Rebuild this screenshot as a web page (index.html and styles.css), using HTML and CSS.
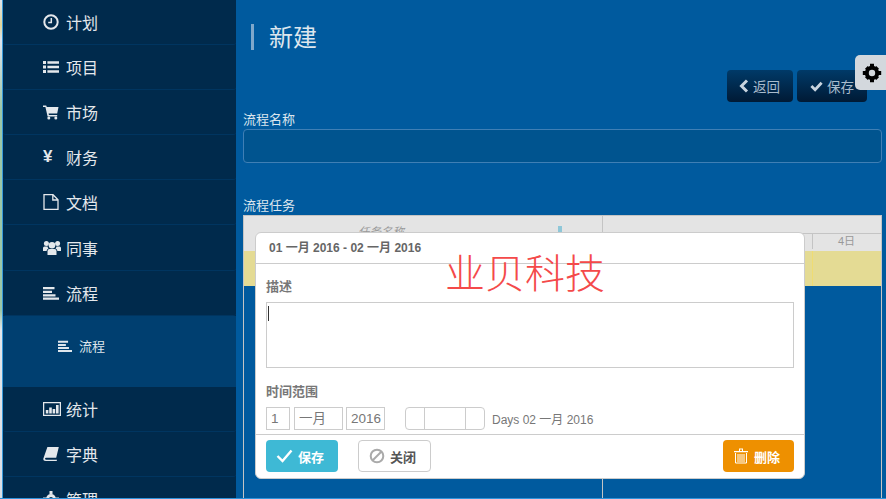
FILE: index.html
```html
<!DOCTYPE html>
<html lang="zh-CN">
<head>
    <meta charset="UTF-8">
    <title>新建流程</title>
    <link rel="stylesheet" href="styles.css">
</head>
<body>
    <div class="page">
        <div class="edge"></div>
        <nav class="sidebar">
            <a class="nav-item">
                <svg class="nav-icon" viewBox="0 0 16 16"><circle cx="8" cy="8" r="6.700" fill="none" stroke="currentColor" stroke-width="2"/><path d="M8.300 4v4.600H5.200" fill="none" stroke="currentColor" stroke-width="1.500"/></svg>
                <span>计划</span>
            </a>
            <a class="nav-item">
                <svg class="nav-icon" viewBox="0 0 16 16"><path d="M0 2h3v3H0zM0 6.500h3v3H0zM0 11h3v3H0zM4.400 2.300H16v2.400H4.400zM4.400 6.800H16v2.400H4.400zM4.400 11.300H16v2.400H4.400z" fill="currentColor"/></svg>
                <span>项目</span>
            </a>
            <a class="nav-item">
                <svg class="nav-icon" viewBox="0 0 16 16"><path d="M0 1.500h3.200l.6 1.600H15.500l-1.300 6.400H5.600l.3 1.400h8.300v1.500H4.600L2.400 3H0z" fill="currentColor"/><circle cx="5.800" cy="14" r="1.500" fill="currentColor"/><circle cx="12.800" cy="14" r="1.500" fill="currentColor"/></svg>
                <span>市场</span>
            </a>
            <a class="nav-item">
                <span class="nav-yen">¥</span>
                <span>财务</span>
            </a>
            <a class="nav-item">
                <svg class="nav-icon" viewBox="0 0 16 16"><path d="M1 .7h9L15 5.700v9.700H1zM9.800 1v5H15" fill="none" stroke="currentColor" stroke-width="1.300"/></svg>
                <span>文档</span>
            </a>
            <a class="nav-item">
                <svg class="nav-icon nav-icon-wide" viewBox="0 0 18 16"><circle cx="9" cy="5.300" r="3.300" fill="currentColor"/><circle cx="3.400" cy="3.600" r="2.500" fill="currentColor"/><circle cx="14.600" cy="3.600" r="2.500" fill="currentColor"/><path d="M4.500 15V11Q4.500 9 6.500 9h5q2 0 2 2V15zM0 11V8Q0 6.400 1.600 6.400H4.500Q4.800 7.800 5.500 8.400 3.600 9 3.600 11zM18 11V8Q18 6.400 16.400 6.400H13.500Q13.200 7.800 12.500 8.400 14.400 9 14.400 11z" fill="currentColor"/></svg>
                <span>同事</span>
            </a>
            <a class="nav-item">
                <svg class="nav-icon" viewBox="0 0 16 16"><path d="M0 2h11.500v2.200H0zM0 5.800h9v2.200H0zM0 9.200h12.500v2.200H0zM0 12.600h16v2.200H0z" fill="currentColor"/></svg>
                <span>流程</span>
            </a>
            <div class="nav-sub">
                <svg class="nav-icon sub-icon" viewBox="0 0 16 16"><path d="M0 2h11.500v2.200H0zM0 5.800h9v2.200H0zM0 9.200h12.500v2.200H0zM0 12.600h16v2.200H0z" fill="currentColor"/></svg>
                <span>流程</span>
            </div>
            <a class="nav-item">
                <svg class="nav-icon nav-icon-wide" viewBox="0 0 18 16"><path d="M.6 1.600h16.800v12.800H.6z" fill="none" stroke="currentColor" stroke-width="1.300"/><path d="M2.800 9h2.600v3.600H2.800zM6.200 6.400h2.600v6.200H6.200zM9.600 8h2.600v4.600H9.600zM13 4h2.600v8.600H13z" fill="currentColor"/></svg>
                <span>统计</span>
            </a>
            <a class="nav-item">
                <svg class="nav-icon" viewBox="0 0 16 16"><path d="M4.400 1H15.800L13.200 11.800H3.200q-1.500 0-1.100 1.300.2.700 1.100.7h10.800l-.3 1.200H2.800Q.2 15 .3 12.800z" fill="currentColor"/></svg>
                <span>字典</span>
            </a>
            <a class="nav-item">
                <svg class="nav-icon" viewBox="0 0 16 16"><circle cx="8" cy="8" r="3.600" fill="none" stroke="currentColor" stroke-width="3"/><path d="M6.500 0h3v3h-3zM6.500 13h3v3h-3zM0 6.500h3v3H0zM13 6.500h3v3h-3z" fill="currentColor"/></svg>
                <span>管理</span>
            </a>
        </nav>

        <main class="content">
            <h1 class="page-title">新建</h1>
            <div class="toolbar">
                <button class="btn-dark btn-back" type="button">
                    <svg class="btn-icon" viewBox="0 0 10 14"><path d="M8 1.500 2.500 7 8 12.500" fill="none" stroke="currentColor" stroke-width="3"/></svg>
                    返回
                </button>
                <button class="btn-dark btn-keep" type="button">
                    <svg class="btn-icon btn-icon-check" viewBox="0 0 14 12"><path d="M1.500 6 5.500 10 12.500 2.500" fill="none" stroke="currentColor" stroke-width="3"/></svg>
                    保存
                </button>
            </div>
            <label class="field-label">流程名称</label>
            <div class="name-input"></div>
            <label class="field-label task-label">流程任务</label>
            <div class="gantt">
                <div class="gantt-left">
                    <div class="gantt-head">
                        <span class="gantt-name">任务名称</span>
                        <span class="gantt-mark"></span>
                    </div>
                    <div class="gantt-row"></div>
                </div>
                <div class="gantt-right">
                    <div class="gantt-months"></div>
                    <div class="gantt-days"><span class="gantt-day">4日</span></div>
                    <div class="gantt-row gantt-row-lined"></div>
                </div>
            </div>
        </main>

        <div class="gear-tab">
            <svg viewBox="0 0 20 20" width="20" height="20"><circle cx="10" cy="10" r="5.200" fill="none" stroke="#000" stroke-width="4"/><path d="M8 .8h4v3.600H8zM8 15.600h4v3.600H8zM.8 8h3.600v4H.8zM15.600 8h3.600v4h-3.600zM3 5.800 5.800 3l2.400 2.400-2.800 2.800zM14.200 17 17 14.200l-2.400-2.400-2.800 2.800zM14.200 3 17 5.800l-2.400 2.400-2.800-2.800zM3 14.200 5.800 17l2.400-2.400-2.800-2.800z" fill="#000"/></svg>
        </div>

        <section class="dialog">
            <header class="dialog-head">01 一月 2016 - 02 一月 2016</header>
            <div class="dialog-body">
                <div class="dialog-label">描述</div>
                <div class="dialog-text"><span class="caret"></span></div>
                <div class="dialog-label range-label">时间范围</div>
                <div class="range-row">
                    <div class="box box-day">1</div>
                    <div class="box box-month">一月</div>
                    <div class="box box-year">2016</div>
                    <div class="time-group"><i></i><i class="time-mid"></i><i></i></div>
                    <span class="range-text">Days 02 一月 2016</span>
                </div>
            </div>
            <footer class="dialog-foot">
                <button class="btn btn-save" type="button">
                    <svg width="17" height="14" viewBox="0 0 17 14"><path d="M1.500 7 6.500 12 15.500 1.500" fill="none" stroke="#fff" stroke-width="2.400"/></svg>
                    保存
                </button>
                <button class="btn btn-close" type="button">
                    <svg width="16" height="16" viewBox="0 0 16 16"><circle cx="8" cy="8" r="6.300" fill="none" stroke="#aaa" stroke-width="2"/><path d="M3.500 12.500 12.500 3.500" stroke="#aaa" stroke-width="2"/></svg>
                    关闭
                </button>
                <button class="btn btn-delete" type="button">
                    <svg width="14" height="16" viewBox="0 0 14 16"><path d="M0 3h14v1.200H0zM5 .5h4V3H8V1.500H6V3H5z" fill="#fff"/><path d="M1.500 5v10h11V5M4 6v8M6 6v8M8 6v8M10 6v8" fill="none" stroke="#fff"/></svg>
                    删除
                </button>
            </footer>
        </section>

        <div class="watermark">业贝科技</div>
        <div class="bottom-line"></div>
    </div>
</body>
</html>
```
FILE: styles.css
```css
html, body {
    margin: 0;
    height: 100%;
    overflow: hidden;
}
body {
    font-family: "Liberation Sans", "Noto Sans CJK SC", sans-serif;
    background: #005a9e;
}
.page {
    position: relative;
    display: flex;
    width: 886px;
    height: 499px;
    overflow: hidden;
    background: #005a9e;
}
.edge {
    box-sizing: border-box;
    flex: 0 0 3px;
    border-right: 1px solid #3a9ad9;
    background: linear-gradient(#dfe5ee 0, #e4d79a 25px, #dfe5ee 40px, #9cc8a8 110px, #9cc8a8 310px, #e4e6ea 330px, #dcdfe6 499px);
}
.sidebar {
    flex: 0 0 233px;
    height: 499px;
    overflow: hidden;
    background: #002a4c;
    color: #e4e8ec;
    font-size: 16px;
}
.nav-item {
    display: flex;
    align-items: center;
    box-sizing: border-box;
    height: 45.1px;
    padding-left: 40px;
    border-bottom: 1px solid #003560;
    border-radius: 0 0 3px 3px;
}
.nav-item span:last-child {
    margin-left: 7px;
}
.nav-icon {
    width: 16px;
    height: 16px;
    flex: none;
}
.nav-icon-wide {
    width: 18px;
    margin-right: -2px;
}
.nav-yen {
    width: 16px;
    font-size: 17px;
    font-weight: bold;
}
.nav-sub {
    display: flex;
    align-items: center;
    box-sizing: border-box;
    height: 71px;
    padding: 0 0 11px 55px;
    background: #003f70;
    font-size: 13px;
    color: #dfe6ec;
}
.nav-sub span {
    margin-left: 7px;
}
.sub-icon {
    width: 14px;
    height: 14px;
}
.content {
    flex: 1;
    min-width: 0;
    padding-left: 7px;
    color: #dce6ee;
}
.page-title {
    margin: 24px 0 0 8px;
    padding-left: 15px;
    height: 26px;
    border-left: 3px solid #7fa8cb;
    font-size: 24px;
    font-weight: normal;
    line-height: 28px;
}
.toolbar {
    display: flex;
    justify-content: flex-end;
    gap: 4px;
    margin: 20px 19px 0 0;
}
.btn-dark {
    display: flex;
    align-items: center;
    box-sizing: border-box;
    height: 32px;
    padding: 0 0 0 12px;
    border: 0;
    border-radius: 4px;
    background: linear-gradient(#003a68, #001a35);
    color: #a9bccd;
    font: 13.500px "Liberation Sans", "Noto Sans CJK SC", sans-serif;
}
.btn-back {
    width: 66px;
}
.btn-keep {
    width: 70px;
    padding-left: 13px;
}
.btn-icon {
    width: 10px;
    height: 14px;
    margin-right: 4px;
    color: #c8d4df;
}
.btn-icon-check {
    width: 13px;
}
.field-label {
    display: block;
    font-size: 13px;
    line-height: 16px;
}
.toolbar + .field-label {
    margin-top: 10px;
}
.name-input {
    box-sizing: border-box;
    width: 639px;
    height: 34px;
    margin-top: 1px;
    border: 1px solid #3f7fb5;
    border-radius: 4px;
    background: #00548f;
}
.task-label {
    margin-top: 35px;
}
.gantt {
    display: flex;
    box-sizing: border-box;
    width: 639px;
    height: 290px;
    margin-top: 1px;
    border-top: 1px solid #c4c4c4;
    border-left: 1px solid #c4c4c4;
    border-right: 1px solid #c4c4c4;
}
.gantt-left {
    width: 358px;
    border-right: 1px solid #c4c4c4;
}
.gantt-right {
    flex: 1;
}
.gantt-head {
    display: flex;
    justify-content: center;
    position: relative;
    box-sizing: border-box;
    height: 34px;
    padding-right: 84px;
    background: #e4e4e4;
    color: #999;
    font-size: 11.500px;
    font-style: italic;
    line-height: 32px;
}
.gantt-mark {
    position: absolute;
    left: 314px;
    top: 10px;
    width: 4px;
    height: 8px;
    background: #8fc7d8;
}
.gantt-months {
    height: 17px;
    border-bottom: 1px solid #c4c4c4;
    background: #e4e4e4;
}
.gantt-days {
    box-sizing: border-box;
    height: 16px;
    padding-left: 209px;
    background: #e4e4e4;
}
.gantt-day {
    display: block;
    border-left: 1px solid #c4c4c4;
    padding-left: 25px;
    color: #999;
    font-size: 11px;
    line-height: 15px;
}
.gantt-row {
    height: 35px;
    background: #e4db94;
}
.gantt-row-lined {
    background: linear-gradient(90deg, #e4db94 209px, #efdc73 209px, #efdc73 210px, #e4db94 210px);
}
.gear-tab {
    position: absolute;
    left: 855px;
    top: 55px;
    display: flex;
    align-items: center;
    justify-content: center;
    box-sizing: border-box;
    width: 31px;
    height: 35px;
    padding-left: 2px;
    border-radius: 5px 0 0 5px;
    background: #d3d8dd;
}
.dialog {
    position: absolute;
    left: 255px;
    top: 232px;
    box-sizing: border-box;
    width: 550px;
    height: 247px;
    border: 1px solid #ccc;
    border-radius: 6px;
    background: #fff;
    color: #777;
}
.dialog-head {
    height: 30px;
    padding-left: 13px;
    border-bottom: 1px solid #ccc;
    color: #666;
    font-size: 12px;
    font-weight: bold;
    line-height: 30px;
}
.dialog-body {
    box-sizing: border-box;
    height: 171px;
    padding: 14px 10px 0;
    border-bottom: 1px solid #ccc;
}
.dialog-label {
    font-size: 13px;
    font-weight: bold;
    line-height: 17px;
}
.dialog-text {
    box-sizing: border-box;
    width: 528px;
    height: 66px;
    margin-top: 7px;
    padding: 3px 1px;
    border: 1px solid #ccc;
}
.caret {
    display: block;
    width: 1px;
    height: 15px;
    background: #333;
}
.range-label {
    margin-top: 15px;
}
.range-row {
    display: flex;
    align-items: center;
    margin-top: 7px;
    font-size: 13.500px;
    color: #777;
}
.box {
    box-sizing: border-box;
    height: 23px;
    padding-left: 4px;
    border: 1px solid #ccc;
    line-height: 21px;
}
.box-day {
    width: 24px;
    margin-right: 4px;
}
.box-month {
    width: 49px;
    margin-right: 3px;
}
.box-year {
    width: 39px;
}
.time-group {
    display: flex;
    box-sizing: border-box;
    width: 80px;
    height: 23px;
    margin-left: 20px;
    border: 1px solid #ccc;
    border-radius: 4px;
}
.time-group i {
    width: 18px;
}
.time-group .time-mid {
    width: 40px;
    border-left: 1px solid #ccc;
    border-right: 1px solid #ccc;
}
.range-text {
    margin-left: 7px;
    font-size: 12px;
}
.dialog-foot {
    display: flex;
    padding: 5px 10px 0;
}
.btn {
    display: flex;
    align-items: center;
    gap: 5px;
    box-sizing: border-box;
    height: 32px;
    padding: 0 0 0 10px;
    border-radius: 4px;
    font: bold 13px "Liberation Sans", "Noto Sans CJK SC", sans-serif;
}
.btn-save {
    width: 72px;
    border: 0;
    background: #3eb9d5;
    color: #fff;
}
.btn-close {
    width: 73px;
    margin-left: 20px;
    padding-left: 10px;
    border: 1px solid #ccc;
    background: #fff;
    color: #555;
}
.btn-delete {
    width: 71px;
    margin-left: auto;
    padding-left: 11px;
    gap: 6px;
    border: 0;
    background: #ee9000;
    color: #fff;
}
.gantt-days {
    height: 17px;
}
.gantt-head {
    height: 35px;
}
.watermark {
    position: absolute;
    left: 445px;
    top: 247px;
    color: #f44a4a;
    font-family: "Noto Sans CJK SC", sans-serif;
    font-size: 40px;
    font-weight: 300;
    line-height: 48px;
    white-space: nowrap;
}
.bottom-line {
    position: absolute;
    left: 0;
    right: 0;
    bottom: 0;
    height: 1px;
    background: #2f93dc;
}
```
